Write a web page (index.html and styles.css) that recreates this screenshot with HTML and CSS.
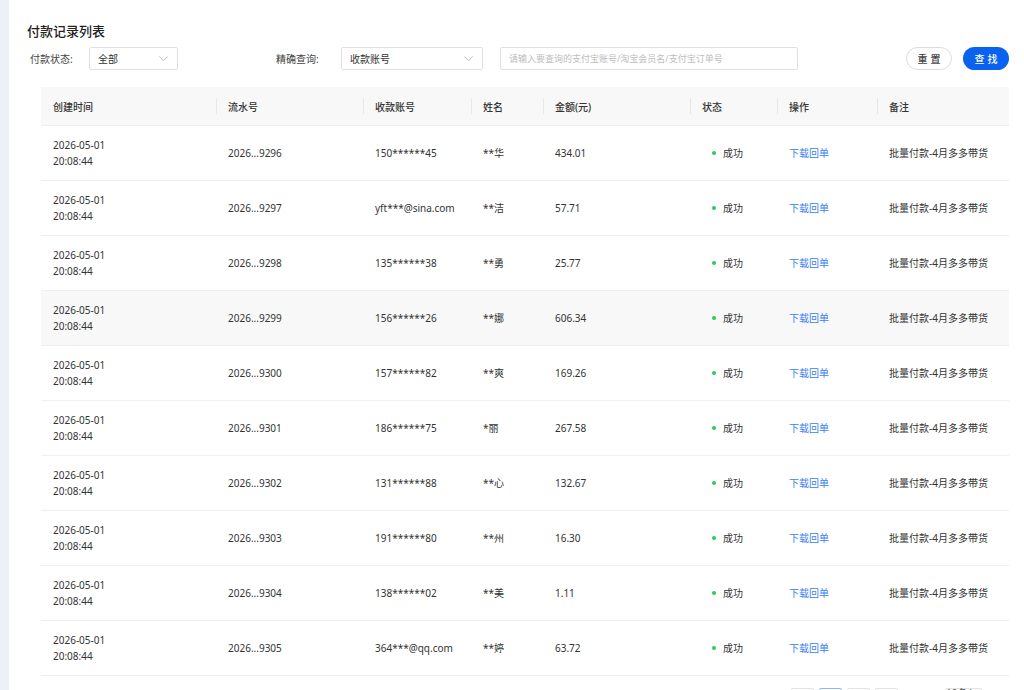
FILE: index.html
```html
<!DOCTYPE html>
<html lang="zh-CN">
<head>
  <meta charset="UTF-8">
  <meta name="viewport" content="width=device-width, initial-scale=1.0">
  <title>付款记录列表</title>
  <link rel="stylesheet" href="styles.css">
</head>
<body>

  <div class="side"></div>

  <div class="main">
    <h1 class="title">付款记录列表</h1>

    <div class="filters">
      <label class="lbl lbl-status">付款状态:</label>
      <div class="select sel-status">
        <span>全部</span>
        <svg class="arrow" width="9" height="6" viewBox="0 0 9 6"><polyline points="0.5,0.5 4.5,4.8 8.5,0.5" fill="none" stroke="#bdbdbd" stroke-width="1"/></svg>
      </div>

      <label class="lbl lbl-query">精确查询:</label>
      <div class="select sel-query">
        <span>收款账号</span>
        <svg class="arrow" width="9" height="6" viewBox="0 0 9 6"><polyline points="0.5,0.5 4.5,4.8 8.5,0.5" fill="none" stroke="#bdbdbd" stroke-width="1"/></svg>
      </div>

      <input class="search" type="text" placeholder="请输入要查询的支付宝账号/淘宝会员名/支付宝订单号">

      <div class="btns">
        <button class="btn btn-reset">重置</button>
        <button class="btn btn-find">查找</button>
      </div>
    </div>

    <table class="list">
      <colgroup>
        <col style="width:175px">
        <col style="width:147px">
        <col style="width:108px">
        <col style="width:72px">
        <col style="width:147px">
        <col style="width:87px">
        <col style="width:100px">
        <col style="width:132px">
      </colgroup>
      <thead>
        <tr>
          <th>创建时间</th>
          <th>流水号</th>
          <th>收款账号</th>
          <th>姓名</th>
          <th>金额(元)</th>
          <th>状态</th>
          <th>操作</th>
          <th>备注</th>
        </tr>
      </thead>
      <tbody>
        <tr>
          <td>2026-05-01<br>20:08:44</td>
          <td>2026...9296</td>
          <td>150******45</td>
          <td>**华</td>
          <td>434.01</td>
          <td class="status"><i class="dot"></i>成功</td>
          <td><a href="#">下载回单</a></td>
          <td>批量付款-4月多多带货</td>
        </tr>
        <tr>
          <td>2026-05-01<br>20:08:44</td>
          <td>2026...9297</td>
          <td>yft***@sina.com</td>
          <td>**洁</td>
          <td>57.71</td>
          <td class="status"><i class="dot"></i>成功</td>
          <td><a href="#">下载回单</a></td>
          <td>批量付款-4月多多带货</td>
        </tr>
        <tr>
          <td>2026-05-01<br>20:08:44</td>
          <td>2026...9298</td>
          <td>135******38</td>
          <td>**勇</td>
          <td>25.77</td>
          <td class="status"><i class="dot"></i>成功</td>
          <td><a href="#">下载回单</a></td>
          <td>批量付款-4月多多带货</td>
        </tr>
        <tr class="hover">
          <td>2026-05-01<br>20:08:44</td>
          <td>2026...9299</td>
          <td>156******26</td>
          <td>**娜</td>
          <td>606.34</td>
          <td class="status"><i class="dot"></i>成功</td>
          <td><a href="#">下载回单</a></td>
          <td>批量付款-4月多多带货</td>
        </tr>
        <tr>
          <td>2026-05-01<br>20:08:44</td>
          <td>2026...9300</td>
          <td>157******82</td>
          <td>**爽</td>
          <td>169.26</td>
          <td class="status"><i class="dot"></i>成功</td>
          <td><a href="#">下载回单</a></td>
          <td>批量付款-4月多多带货</td>
        </tr>
        <tr>
          <td>2026-05-01<br>20:08:44</td>
          <td>2026...9301</td>
          <td>186******75</td>
          <td>*丽</td>
          <td>267.58</td>
          <td class="status"><i class="dot"></i>成功</td>
          <td><a href="#">下载回单</a></td>
          <td>批量付款-4月多多带货</td>
        </tr>
        <tr>
          <td>2026-05-01<br>20:08:44</td>
          <td>2026...9302</td>
          <td>131******88</td>
          <td>**心</td>
          <td>132.67</td>
          <td class="status"><i class="dot"></i>成功</td>
          <td><a href="#">下载回单</a></td>
          <td>批量付款-4月多多带货</td>
        </tr>
        <tr>
          <td>2026-05-01<br>20:08:44</td>
          <td>2026...9303</td>
          <td>191******80</td>
          <td>**州</td>
          <td>16.30</td>
          <td class="status"><i class="dot"></i>成功</td>
          <td><a href="#">下载回单</a></td>
          <td>批量付款-4月多多带货</td>
        </tr>
        <tr>
          <td>2026-05-01<br>20:08:44</td>
          <td>2026...9304</td>
          <td>138******02</td>
          <td>**美</td>
          <td>1.11</td>
          <td class="status"><i class="dot"></i>成功</td>
          <td><a href="#">下载回单</a></td>
          <td>批量付款-4月多多带货</td>
        </tr>
        <tr>
          <td>2026-05-01<br>20:08:44</td>
          <td>2026...9305</td>
          <td>364***@qq.com</td>
          <td>**婷</td>
          <td>63.72</td>
          <td class="status"><i class="dot"></i>成功</td>
          <td><a href="#">下载回单</a></td>
          <td>批量付款-4月多多带货</td>
        </tr>
      </tbody>
    </table>

    <!-- 分页 -->
    <div class="pager">
      <span class="pg">&lt;</span>
      <span class="pg active">1</span>
      <span class="pg">2</span>
      <span class="pg">3</span>
      <span class="pg pg-size">10条/页</span>
    </div>
  </div>

</body>
</html>
```

FILE: styles.css
```css
body {
  margin: 0;
  font-family: 'Noto Sans', 'Noto Sans CJK SC', sans-serif;
  font-size: 10px;
  color: #333;
  background-color: #fff;
  display: flex;
  min-height: 100vh;
}

.side {
  width: 9px;
  flex-shrink: 0;
  background-color: #eef0f8;
}

.main {
  flex: 1;
  padding: 21px 15px 20px 18px;
}

.title {
  margin: 0;
  font-size: 13px;
  line-height: 20px;
  font-weight: 500;
  color: #222;
}

/* 检索条件 */
.filters {
  display: flex;
  align-items: center;
  height: 23px;
  margin-top: 6px;
}

.lbl {
  color: #444;
  font-size: 10px;
}

.lbl-status {
  width: 59px;
  padding-left: 3px;
}

.lbl-query {
  width: 65px;
  margin-left: 98px;
}

.select {
  height: 23px;
  box-sizing: border-box;
  border: 1px solid #e0e0e0;
  border-radius: 2px;
  display: flex;
  align-items: center;
  justify-content: space-between;
  padding: 0 9px 0 8px;
  color: #333;
}

.sel-status {
  width: 89px;
}

.sel-query {
  width: 142px;
}

.arrow {
  display: block;
}

.search {
  width: 298px;
  height: 23px;
  box-sizing: border-box;
  margin-left: 17px;
  border: 1px solid #e0e0e0;
  border-radius: 2px;
  padding: 0 8px;
  font-family: 'Noto Sans', 'Noto Sans CJK SC', sans-serif;
  font-size: 9px;
  outline: none;
}

.search::placeholder {
  color: #bdbdbd;
}

.btns {
  margin-left: auto;
  display: flex;
  gap: 11px;
}

.btn {
  width: 46px;
  height: 23px;
  border-radius: 12px;
  font-family: 'Noto Sans', 'Noto Sans CJK SC', sans-serif;
  font-size: 10px;
  font-weight: 500;
  letter-spacing: 3px;
  padding: 0 0 0 3px;
  cursor: pointer;
}

.btn-reset {
  background-color: #fff;
  border: 1px solid #dcdcdc;
  color: #444;
}

.btn-find {
  background-color: #0a63ee;
  border: none;
  color: #fff;
}

/* 列表 */
.list {
  margin: 17px 0 0 14px;
  width: 968px;
  border-collapse: collapse;
  table-layout: fixed;
}

.list th {
  position: relative;
  height: 38px;
  padding: 0 12px;
  text-align: left;
  font-weight: 500;
  color: #333;
  background-color: #f8f8f8;
  border-bottom: 1px solid #eee;
}

.list th + th::before {
  content: "";
  position: absolute;
  left: 0;
  top: 11px;
  width: 1px;
  height: 16px;
  background-color: #e8e8e8;
}

.list td {
  height: 54px;
  padding: 0 12px;
  line-height: 16px;
  color: #333;
  border-bottom: 1px solid #efefef;
  white-space: nowrap;
}

.list tr.hover td {
  background-color: #f8f8f8;
}

.list td.status {
  padding-left: 22px;
}

.dot {
  display: inline-block;
  width: 4px;
  height: 4px;
  border-radius: 50%;
  background-color: #2fc85a;
  margin-right: 7px;
  vertical-align: 2px;
}

.list a {
  color: #3b82f2;
  text-decoration: none;
}

/* 分页 */
.pager {
  display: flex;
  justify-content: flex-end;
  gap: 5px;
  margin: 12px 27px 0 0;
}

.pg {
  width: 23px;
  height: 23px;
  box-sizing: border-box;
  border: 1px solid #e3e3e3;
  border-radius: 2px;
  display: flex;
  align-items: center;
  justify-content: center;
  color: #555;
}

.pg.active {
  border-color: #8fb4f7;
  color: #0a63ee;
}

.pg-size {
  width: 37px;
  margin-left: 42px;
}
```
